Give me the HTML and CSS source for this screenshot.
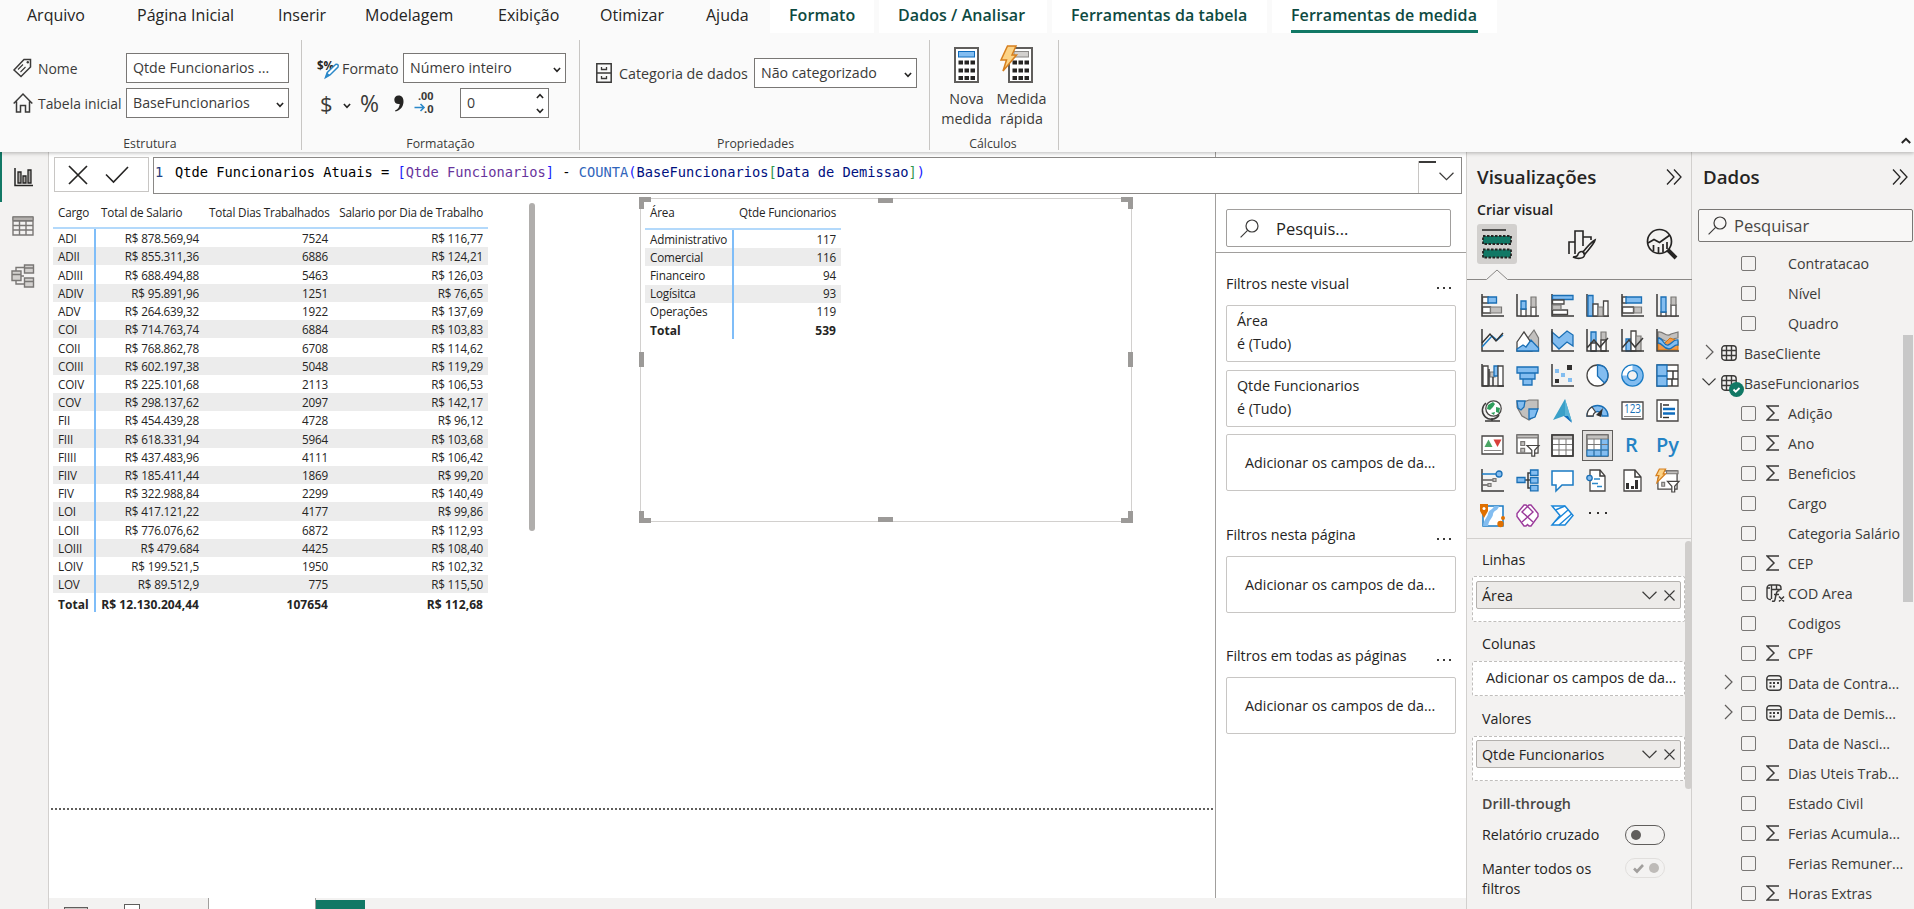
FILE: index.html
```html
<!DOCTYPE html>
<html lang="pt-BR">
<head>
<meta charset="utf-8">
<title>Power BI Desktop</title>
<link rel="stylesheet" href="styles.css">
</head>
<body>
<svg class="sprite" aria-hidden="true">
  <symbol id="sigma" viewBox="0 0 14 16"><path d="M13 1H1l7 7-7 7h12" fill="none" stroke="#3b3a39" stroke-width="1.5"/></symbol>
  <symbol id="chev-r" viewBox="0 0 9 16"><path d="M1 1l7 7-7 7" fill="none" stroke="#605e5c" stroke-width="1.2"/></symbol>
  <symbol id="chev-d" viewBox="0 0 14 8"><path d="M.5.5L7 7 13.500.5" fill="none" stroke="#3b3a39" stroke-width="1.1"/></symbol>
  <symbol id="caret" viewBox="0 0 8 6"><path d="M.9 1L4 4.300 7.100 1" fill="none" stroke="#252423" stroke-width="1.600"/></symbol>
  <symbol id="close" viewBox="0 0 11 11"><path d="M.5.5l10 10M10.500.5l-10 10" fill="none" stroke="#3b3a39" stroke-width="1.100"/></symbol>
  <symbol id="dbl" viewBox="0 0 16 16"><path d="M1 .5L8 8l-7 7.500M8 .5L15 8l-7 7.500" fill="none" stroke="#252423" stroke-width="1.300"/></symbol>
  <symbol id="lens" viewBox="0 0 19 19"><g fill="none" stroke="#3b3a39" stroke-width="1.200"><circle cx="12" cy="7" r="6"/><path d="M7.600 11.400L.6 18.400"/></g></symbol>
  <symbol id="tbl" viewBox="0 0 16 16"><g fill="none" stroke="#3b3a39" stroke-width="1.400"><rect x=".8" y=".8" width="14.400" height="14.400" rx="3"/><path d="M5.500 1v14M10.500 1v14M1 5.500h14M1 10.500h14"/></g></symbol>
  <symbol id="cal" viewBox="0 0 16 16"><g fill="none" stroke="#3b3a39" stroke-width="1.400"><rect x=".8" y=".8" width="14.400" height="14.400" rx="3"/><path d="M1 4.800h14"/></g><path d="M7 7h2v2H7zM11 7h2v2h-2zM3.500 10.500h2v2h-2zM7 10.500h2v2H7zM3.500 7h2v2h-2z" fill="#3b3a39"/></symbol>
</svg>

<div class="app">
<header class="ribbon">
  <nav class="tabs">
    <span class="tab t1">Arquivo</span><span class="tab t2">Página Inicial</span><span class="tab t3">Inserir</span><span class="tab t4">Modelagem</span><span class="tab t5">Exibição</span><span class="tab t6">Otimizar</span><span class="tab t7">Ajuda</span>
    <span class="tab ctx c1">Formato</span><span class="tab ctx c2">Dados / Analisar</span><span class="tab ctx c3">Ferramentas da tabela</span><span class="tab ctx c4"><b class="active">Ferramentas de medida</b></span>
  </nav>
  <div class="groups">
    <section class="group g1">
      <div class="field">
        <svg class="i20" viewBox="0 0 20 20"><g fill="none" stroke="#3b3a39" stroke-width="1.500"><path d="M1 12L11 1.500h6.500v7.500L8 18.500z"/><path d="M5 11.500l5-5M7.500 14l5-5" stroke-width="1.100"/></g><circle cx="14.800" cy="4.300" r="1.200" fill="#3b3a39"/></svg>
        <label class="lb">Nome</label><div class="box">Qtde Funcionarios ...</div>
      </div>
      <div class="field">
        <svg class="i20" viewBox="0 0 20 20"><path d="M.7 10.500L10 1l9.300 9.500M3.500 8.500V19H7.500v-6.500h5V19h4V8.500" fill="none" stroke="#3b3a39" stroke-width="1.500"/></svg>
        <label class="lb">Tabela inicial</label><div class="box">BaseFuncionarios<svg class="car"><use href="#caret"/></svg></div>
      </div>
      <div class="cap">Estrutura</div>
    </section>
    <section class="group g2">
      <div class="field">
        <svg class="i22" viewBox="0 0 22 22"><text x="0" y="13" class="fmt" textLength="17" lengthAdjust="spacingAndGlyphs">$%</text><path d="M8.500 20.500l1.800-5L18.500 7.500c2-1 3.300.5 2.500 2.500l-8 8z" fill="#fff" stroke="#2b88c9" stroke-width="1.500"/><path d="M8 21l2-5.500 3 2.800z" fill="#2b88c9"/></svg>
        <label class="lb">Formato</label><div class="box">Número inteiro<svg class="car"><use href="#caret"/></svg></div>
      </div>
      <div class="field tools">
        <span class="sym dollar">$</span><svg class="car2"><use href="#caret"/></svg><span class="sym pct">%</span>
        <svg class="comma" viewBox="0 0 10 17"><path d="M4.500.5C8 .5 9.700 3 9.500 7 9.200 12 6 15.500 1.500 16.500l-.5-1C4 14.300 5.500 12 5.700 9 2.500 9.500.3 7.500.3 4.700.3 2.300 2 .5 4.500.5z" fill="#252423"/></svg>
        <svg class="dec" viewBox="0 0 20 22"><text x="4" y="7.800" class="fmt2" textLength="15.500" lengthAdjust="spacingAndGlyphs">.00</text><text x="10" y="21.400" class="fmt2" textLength="9.500" lengthAdjust="spacingAndGlyphs">.0</text><path d="M.5 15.500h9M6.500 12l3.500 3.500L6.500 19" fill="none" stroke="#2b88c9" stroke-width="1.600"/></svg>
        <div class="box num">0<span class="spin"><svg class="up"><use href="#caret"/></svg><svg><use href="#caret"/></svg></span></div>
      </div>
      <div class="cap">Formatação</div>
    </section>
    <section class="group g3">
      <div class="field">
        <svg class="cab" viewBox="0 0 16 20"><g fill="none" stroke="#3b3a39" stroke-width="1.500"><path d="M.8.8h14.400v18.400H.8zM1 10h14"/><path d="M5.500 4v2.500h5V4M5.500 13v2.500h5V13" stroke-width="1.300"/></g></svg>
        <label class="lb">Categoria de dados</label><div class="box">Não categorizado<svg class="car"><use href="#caret"/></svg></div>
      </div>
      <div class="cap">Propriedades</div>
    </section>
    <section class="group g4">
      <div class="bigs">
        <div class="big">
          <svg viewBox="0 0 34 38"><rect x="6" y="3" width="23" height="34" fill="#fff" stroke="#605e5c" stroke-width="2"/><rect x="9.500" y="6.500" width="16" height="5.500" fill="#83bdf0" stroke="#0f6cbd"/><path d="M9.500 17.500h17M9.500 25.500h17M9.500 33h17" stroke="#252423" stroke-width="4" stroke-dasharray="4.500 1.500"/></svg>
          <span>Nova<br>medida</span>
        </div>
        <div class="big">
          <svg viewBox="0 0 34 38"><rect x="10" y="3" width="23" height="34" fill="#fff" stroke="#605e5c" stroke-width="2"/><rect x="15" y="6.500" width="14.500" height="5.500" fill="#d2d0ce" stroke="#8a8886"/><path d="M13.500 17.500h17M13.500 25.500h17M13.500 33h17" stroke="#252423" stroke-width="4" stroke-dasharray="4.500 1.500"/><path d="M8.500 1H17l-4 9h4.500L4 26l3.500-11H2z" fill="#fcd386" stroke="#d67f1e" stroke-width="1.500"/></svg>
          <span>Medida<br>rápida</span>
        </div>
      </div>
      <div class="cap">Cálculos</div>
    </section>
    <svg class="collapse" viewBox="0 0 10 7"><path d="M.8 6L5 1.800 9.200 6" fill="none" stroke="#252423" stroke-width="2"/></svg>
  </div>
</header>

<main class="main">
  <aside class="rail">
    <div class="rv on"><svg width="20" height="19" viewBox="0 0 20 19"><path d="M1 0v17.500h18" fill="none" stroke="#252423" stroke-width="1.500"/><path d="M4 4h3v11H4zM9 8h3v7H9zM14 2h3v13h-3z" fill="#a8a6a4" stroke="#252423" stroke-width="1.300"/></svg></div>
    <div class="rv"><svg width="22" height="20" viewBox="0 0 22 20"><path d="M1 1h20v18H1zM1 5h20M1 9.500h20M1 14h20M7.500 5v14M14 5v14" fill="none" stroke="#797775" stroke-width="1.400"/><path d="M1 1h20v3.500H1z" fill="#b3b0ad" stroke="#797775"/></svg></div>
    <div class="rv"><svg width="24" height="24" viewBox="0 0 24 24"><g fill="#d2d0ce" stroke="#797775" stroke-width="1.400"><path d="M5 7V3.500h8M5 16v4h8" fill="none"/><path d="M13.500 1h9v8h-9zM1 7h9v9.500H1zM13.500 14h9v9h-9z"/><path d="M13.500 4h9M1 10.500h9M13.500 17.500h9M10 12h3" /></g></svg></div>
  </aside>

  <div class="work">
    <div class="stage">
      <div class="canvas">
        <table class="mx m1">
          <thead><tr><th>Cargo</th><th>Total de Salario</th><th>Total Dias Trabalhados</th><th>Salario por Dia de Trabalho</th></tr></thead>
          <tbody>
          <tr><td>ADI</td><td>R$ 878.569,94</td><td>7524</td><td>R$ 116,77</td></tr>
          <tr><td>ADII</td><td>R$ 855.311,36</td><td>6886</td><td>R$ 124,21</td></tr>
          <tr><td>ADIII</td><td>R$ 688.494,88</td><td>5463</td><td>R$ 126,03</td></tr>
          <tr><td>ADIV</td><td>R$ 95.891,96</td><td>1251</td><td>R$ 76,65</td></tr>
          <tr><td>ADV</td><td>R$ 264.639,32</td><td>1922</td><td>R$ 137,69</td></tr>
          <tr><td>COI</td><td>R$ 714.763,74</td><td>6884</td><td>R$ 103,83</td></tr>
          <tr><td>COII</td><td>R$ 768.862,78</td><td>6708</td><td>R$ 114,62</td></tr>
          <tr><td>COIII</td><td>R$ 602.197,38</td><td>5048</td><td>R$ 119,29</td></tr>
          <tr><td>COIV</td><td>R$ 225.101,68</td><td>2113</td><td>R$ 106,53</td></tr>
          <tr><td>COV</td><td>R$ 298.137,62</td><td>2097</td><td>R$ 142,17</td></tr>
          <tr><td>FII</td><td>R$ 454.439,28</td><td>4728</td><td>R$ 96,12</td></tr>
          <tr><td>FIII</td><td>R$ 618.331,94</td><td>5964</td><td>R$ 103,68</td></tr>
          <tr><td>FIIII</td><td>R$ 437.483,96</td><td>4111</td><td>R$ 106,42</td></tr>
          <tr><td>FIIV</td><td>R$ 185.411,44</td><td>1869</td><td>R$ 99,20</td></tr>
          <tr><td>FIV</td><td>R$ 322.988,84</td><td>2299</td><td>R$ 140,49</td></tr>
          <tr><td>LOI</td><td>R$ 417.121,22</td><td>4177</td><td>R$ 99,86</td></tr>
          <tr><td>LOII</td><td>R$ 776.076,62</td><td>6872</td><td>R$ 112,93</td></tr>
          <tr><td>LOIII</td><td>R$ 479.684</td><td>4425</td><td>R$ 108,40</td></tr>
          <tr><td>LOIV</td><td>R$ 199.521,5</td><td>1950</td><td>R$ 102,32</td></tr>
          <tr><td>LOV</td><td>R$ 89.512,9</td><td>775</td><td>R$ 115,50</td></tr>
          <tr class="tot"><td>Total</td><td>R$ 12.130.204,44</td><td>107654</td><td>R$ 112,68</td></tr>
          </tbody>
        </table>
        <div class="vscroll"></div>
        <div class="visual">
          <table class="mx m2">
            <thead><tr><th>Área</th><th>Qtde Funcionarios</th></tr></thead>
            <tbody>
            <tr><td>Administrativo</td><td>117</td></tr>
            <tr><td>Comercial</td><td>116</td></tr>
            <tr><td>Financeiro</td><td>94</td></tr>
            <tr><td>Logísitca</td><td>93</td></tr>
            <tr><td>Operações</td><td>119</td></tr>
            <tr class="tot"><td>Total</td><td>539</td></tr>
            </tbody>
          </table>
          <i class="h tl"></i><i class="h tr"></i><i class="h bl"></i><i class="h br"></i>
          <i class="h tm"></i><i class="h bm"></i><i class="h lm"></i><i class="h rm"></i>
        </div>
        <div class="pageend"></div>
      </div>

      <section class="filters">
        <div class="fsearch"><div class="fbox"><svg width="19" height="19"><use href="#lens"/></svg><span>Pesquis...</span></div></div>
        <div class="fsec s1"><div class="fh"><span>Filtros neste visual</span><i class="dots"></i></div>
          <div class="card two"><span>Área</span><span>é (Tudo)</span></div>
          <div class="card two"><span>Qtde Funcionarios</span><span>é (Tudo)</span></div>
          <div class="card add">Adicionar os campos de da...</div></div>
        <div class="fsec s2"><div class="fh"><span>Filtros nesta página</span><i class="dots"></i></div>
          <div class="card add">Adicionar os campos de da...</div></div>
        <div class="fsec s3"><div class="fh"><span>Filtros em todas as páginas</span><i class="dots"></i></div>
          <div class="card add">Adicionar os campos de da...</div></div>
      </section>
    </div>
    <div class="formula">
      <div class="commit">
        <svg width="20" height="20" viewBox="0 0 20 20"><path d="M1 1l18 18M19 1L1 19" stroke="#252423" stroke-width="1.700"/></svg>
        <svg width="24" height="17" viewBox="0 0 24 17"><path d="M1 8.500l7.500 7.500L23 1" fill="none" stroke="#252423" stroke-width="1.600"/></svg>
      </div>
      <div class="dax"><code><span class="ln">1</span>Qtde Funcionarios Atuais = <span class="br1">[</span><span class="ms">Qtde Funcionarios</span><span class="br1">]</span> - <span class="fn">COUNTA</span><span class="br1">(</span><span class="col">BaseFuncionarios</span><span class="br2">[</span><span class="col">Data de Demissao</span><span class="br2">]</span><span class="br1">)</span></code>
        <div class="expand"><i></i><svg width="15" height="9"><use href="#chev-d"/></svg></div></div>
    </div>
    <footer class="pages">
      <div class="views"><i class="desk"></i><i class="phone"></i></div><div class="page"></div><div class="pgon"></div>
    </footer>
  </div>

  <section class="vis">
    <div class="ph"><h2>Visualizações</h2><svg width="16" height="16"><use href="#dbl"/></svg></div>
    <h3>Criar visual</h3>
    <div class="modes">
      <div class="mode on"><svg width="32" height="32" viewBox="0 0 32 32"><path d="M1 2h24" stroke="#252423" stroke-width="1.500"/><path d="M2 8h28v8H2zM2 21.500h28v8H2z" fill="#117865" stroke="#252423" stroke-width="1.800" stroke-dasharray="2.500 1.500"/></svg></div>
      <div class="mode m-fmt"><svg width="30" height="30" viewBox="0 0 30 30"><g fill="none" stroke="#252423" stroke-width="1.600"><path d="M2 25V13h6v12M8 21V2h8v15M16 8h8v3"/><path d="M28 11c-4 2-8 7-12 12l2 2C22 20 27 15 28 11z"/><path d="M16 22.500c-4-.5-5 2-5.500 4-1 1.500-2.500 1.500-4.500 1.500 4 2 11 2 11.500-2z"/></g></svg></div>
      <div class="mode"><svg width="32" height="32" viewBox="0 0 32 32"><g fill="none" stroke="#252423" stroke-width="1.700"><circle cx="13.500" cy="13.500" r="12"/><path d="M2 15l6-3.500 5.500 3L24 7M7.500 17v6M12.500 19v6M17 16v8.500M21 14v7"/></g><path d="M22 22l8 8" stroke="#252423" stroke-width="4"/></svg></div>
    </div>
    <svg class="notch" viewBox="0 0 225 12"><path d="M0 10.500h19.500L30 1l10.500 9.500H225" fill="none" stroke="#8a8886"/></svg>
    <div class="gallery">
      <svg viewBox="0 0 23 23"><path d="M1 0v22h22" class="ax"/><path d="M1.500 3h6v6h-6zM1.500 13h8v6h-8z" class="w"/><path d="M7 3h8.500v6H7z" class="b"/><path d="M9.500 13h11v6h-11z" class="g"/></svg>
      <svg viewBox="0 0 23 23"><path d="M1 0v22h22" class="ax"/><path d="M5 15h5v7H5zM15 13h5v9h-5z" class="w"/><path d="M5 7h5v8H5z" class="b"/><path d="M15 3h5v10h-5z" class="g"/></svg>
      <svg viewBox="0 0 23 23"><path d="M1 0v22h22" class="ax"/><path d="M1.500 1.500H22v4H1.500z" class="b"/><path d="M1.500 6H13v4H1.500zM1.500 16h15v4.500h-15z" class="w"/><path d="M1.500 11H10v4.500H1.500z" class="g"/></svg>
      <svg viewBox="0 0 23 23"><path d="M1 0v22h22" class="ax"/><path d="M2 1.500h5V22H2z" class="b"/><path d="M7 10h5v12H7zM17.500 7H22v15h-4.500z" class="w"/><path d="M12 13h5v9h-5z" class="g"/></svg>
      <svg viewBox="0 0 23 23"><path d="M1 0v22h22" class="ax"/><path d="M1.500 3h4v6h-4zM1.500 13h11v6h-11z" class="w"/><path d="M5 3h15.500v6H5z" class="b"/><path d="M13 13h7.500v6H13z" class="g"/></svg>
      <svg viewBox="0 0 23 23"><path d="M1 0v22h22" class="ax"/><path d="M5 18h5v4H5zM15 11h5v11h-5z" class="w"/><path d="M5 3h5v15H5z" class="b"/><path d="M15 3h5v8h-5z" class="g"/></svg>

      <svg viewBox="0 0 23 23"><path d="M1 0v22h22" class="ax"/><path d="M1 18l10-11 5 4 6-5" class="n" stroke="#1a7bc4"/><path d="M1 14l8-9 6 7 7-8" class="k n"/></svg>
      <svg viewBox="0 0 23 23"><path d="M12 22V9l6-8 4.500 8v13z" class="g"/><path d="M1 13l7-10 8 12v7H1z" class="w"/><path d="M1 22v-2l6-4 3 2 5-7 7.500 8v3z" class="b"/></svg>
      <svg viewBox="0 0 23 23"><path d="M1 3l7 6 8-7 6 4v11l-6-4-8 7-7-7z" class="b"/><path d="M1 0v22h22" class="ax"/></svg>
      <svg viewBox="0 0 23 23"><path d="M5 3h5v19H5z" class="b"/><path d="M15 3h5v19h-5z" class="g"/><path d="M5 14h5v8H5zM15 11h5v11h-5z" class="w"/><path d="M1 0v22h22M1 19l7-8 6 7 8-9" class="ax"/></svg>
      <svg viewBox="0 0 23 23"><path d="M5 10h5v12H5z" class="b"/><path d="M10 2h5v20h-5z" class="w"/><path d="M15 7h5v15h-5z" class="g"/><path d="M1 0v22h22M1 19l7-8 6 7 8-9" class="ax"/></svg>
      <svg viewBox="0 0 23 23"><path d="M2 3c6-1 8 6 13 2l7-2v6c-7 0-7 5-13 3l-7-4z" class="g"/><path d="M2 14h7l5-5 8 3v9H2z" fill="#f2994a" stroke="#d97706"/><path d="M2 9c6 0 5 8 10 7 4-1 5-6 10-5v5c-4-1-5 4-9 4-6 0-6-6-11-6z" class="b"/><path d="M1 0v22h22" class="ax"/></svg>

      <svg viewBox="0 0 23 23"><path d="M2 2h5v20H2z" class="w"/><path d="M9 8h5v5H9z" class="g"/><path d="M13 2h4v10h-4z" class="b"/><path d="M17 2h5v20h-5z" class="w"/><path d="M1 0v22h22M8 5v17M12 13v9" class="ax"/></svg>
      <svg viewBox="0 0 23 23"><path d="M1 3h21v6H1zM4 9h15v6H4zM7 15h9v6H7z" class="b"/></svg>
      <svg viewBox="0 0 23 23"><path d="M1 0v22h22" class="ax"/><path d="M16 1h5v5h-5zM4 15h4v4H4z" fill="#323130"/><path d="M4 5h4v4H4zM10 9h4v4h-4zM17 14h4v4h-4z" fill="#83bdf0"/></svg>
      <svg viewBox="0 0 23 23"><circle cx="11.500" cy="11.500" r="10.500" class="w"/><path d="M11.500 1v11l7 7c6-6 4-18-7-18z" class="b"/></svg>
      <svg viewBox="0 0 23 23"><circle cx="11.500" cy="11.500" r="7.800" fill="none" stroke="#1a7bc4" stroke-width="7"/><circle cx="11.500" cy="11.500" r="7.800" fill="none" stroke="#83bdf0" stroke-width="4.500"/><path d="M3.700 11.500a7.800 7.800 0 0 1 7.800-7.800" fill="none" stroke="#fff" stroke-width="4.500"/></svg>
      <svg viewBox="0 0 23 23"><path d="M1 1h21v21H1z" class="w"/><path d="M1 1h10v11H1zM1 12h10v10H1z" class="b"/><path d="M11 7h11M17 7v8M11 15h11M16 15v7" class="ax"/></svg>

      <svg viewBox="0 0 23 23"><path d="M5 4a9 9 0 1 0 13 12M11 19v3M4 22h15" class="ax"/><circle cx="12.500" cy="9.500" r="7.700" class="w"/><path d="M7 6l5-3 2 2-2 3-3 3-3-1zM15 8l4 1-1 5-3-1zM10 14l4-1-1 3z" fill="#2e9e5b"/></svg>
      <svg viewBox="0 0 23 23"><path d="M1 2l7 1 5-2h9v8l-3 8-6 4-7-4-5-9z" class="g"/><path d="M1 2h8l-1 6-3 3-3-2zM13 10h9l-3 8-6 2z" class="b"/></svg>
      <svg viewBox="0 0 23 23"><path d="M14 0l7 23-8-6-11 4z" fill="#3aa0c8"/><path d="M14 0l7 23-7-6z" fill="#58b3d6"/><path d="M13 17l8 7-4-7z" fill="#0f6cbd"/></svg>
      <svg viewBox="0 0 23 23"><path d="M1 17a10.500 10.500 0 0 1 21 0h-6a4.500 4.500 0 0 0-9 0z" class="b"/><path d="M1 17a10.500 10.500 0 0 1 5-9l3.500 5a5 5 0 0 0-2.500 4z" class="w"/><path d="M10 16l7-7-2 9z" fill="#323130"/></svg>
      <svg viewBox="0 0 23 23"><path d="M1 3h21v17H1z" class="w"/><text x="3" y="14" textLength="17" lengthAdjust="spacingAndGlyphs" class="n123">123</text><path d="M3 17.500h17" stroke="#8a8886"/></svg>
      <svg viewBox="0 0 23 23"><path d="M1 1h21v21H1z" class="w"/><path d="M5 4v15M7 6h6" class="n k"/><path d="M7 10h12M7 14.500h12" stroke="#0f6cbd" stroke-width="2.500"/><path d="M7 18.500h6" class="k n"/></svg>

      <svg viewBox="0 0 23 23"><path d="M1 2h21v18H1z" class="w"/><path d="M3.500 13L7.500 5.500l4 7.500z" fill="#4aa564"/><path d="M12.500 5.500h8L16.500 13z" fill="#d9403a"/><path d="M3 16.500h17" stroke="#8a8886"/></svg>
      <svg viewBox="0 0 24 24"><path d="M1 1h22v19H1z" class="w"/><path d="M1 1h22v3H1z" class="g"/><path d="M5 8h4v4H5zM5 15h4v4H5z" class="g"/><path d="M11.500 12H24l-4.500 5v6h-3v-6z" class="w"/></svg>
      <svg viewBox="0 0 23 23"><path d="M1 1h21v21H1z" class="w"/><path d="M1 1h21v4H1z" class="g"/><path d="M1 10.500h21M1 16h21M8 5v17M15 5v17" class="ln2"/><path d="M1 1h21v21H1z" class="ax"/></svg>
      <svg class="sel" viewBox="0 0 23 23"><path d="M1 1h21v21H1z" class="w"/><path d="M1 16h21v6H1zM15 5h7v17h-7z" fill="#83bdf0"/><path d="M1 1h21v4H1z" class="g"/><path d="M1 10.500h21M1 16h21M8 5v17M15 5v17" class="ln2"/><path d="M1 16v6h21V5M8 16v6M15 5v17M1 16h21" fill="none" stroke="#1a7bc4"/></svg>
      <span class="ltr">R</span>
      <span class="ltr py">Py</span>

      <svg viewBox="0 0 23 23"><path d="M1 0v22h22" class="ax"/><path d="M1 5h16" stroke="#1a7bc4" stroke-width="1.500"/><circle cx="18" cy="5" r="3" class="b"/><path d="M1 11h12M1 16h7" stroke="#605e5c" stroke-width="1.500"/><path d="M12 9.500h3v3h-3zM7 14.500h3v3H7z" class="g"/></svg>
      <svg viewBox="0 0 23 23"><path d="M8 11h7M15 4h-3v15h3" class="ax"/><path d="M1 8.500h8v5H1zM14.500 1H22v5.500h-7.500zM14.500 8.700H22v5.500h-7.500zM14.500 16.300H22v5.500h-7.500z" class="b"/></svg>
      <svg viewBox="0 0 23 23"><path d="M1 2h21v14H11l-6 6v-6H1z" fill="#fff" stroke="#1a7bc4" stroke-width="1.500"/></svg>
      <svg viewBox="0 0 23 23"><path d="M4 1h10l5 6v15H4z" class="w"/><path d="M14 1v6h5" class="ax"/><circle cx="3.500" cy="9" r="2.700" class="b"/><path d="M8 10h6M6 14.500h6M11 17.500h5" stroke="#2b88c9" stroke-width="1.300"/></svg>
      <svg viewBox="0 0 23 23"><path d="M3 1h11l6 7v14H3z" class="w"/><path d="M14 1v7h6" class="ax"/><path d="M5 14h3v6H5zM10 17h3v3h-3zM14 11h3v9h-3z" fill="#323130"/></svg>
      <svg viewBox="0 0 24 24"><path d="M4 2h18v19H2V11z" class="w"/><path d="M11 2h12v3H11z" class="g"/><path d="M6 14h3v4H6z" class="g"/><path d="M12 13h12l-4.500 5v6h-3v-6z" class="w"/><path d="M3.500 0H10L7.500 5H10l-9 9 2-7H0z" fill="#fcd386" stroke="#d67f1e" stroke-width="1.300"/></svg>

      <svg viewBox="0 0 23 23"><path d="M2 2h20v20H2z" fill="#fff" stroke="#1a7bc4" stroke-width="1.500"/><path d="M18 2c-1 5-5 4-6 8 0 4-4 5-5 12H2c1-7 4-8 5-12 1-5 5-4 6-8z" fill="#83bdf0"/><path d="M-1 0h8v7l-4 7-4-7z" fill="#e07000"/><circle cx="3" cy="4.500" r="1.500" fill="#fff"/><circle cx="22" cy="14" r="2" fill="#e07000"/><circle cx="19.500" cy="20" r="3.200" fill="#e07000"/></svg>
      <svg viewBox="0 0 23 23"><path d="M8 1h2l1.500 1.500L13 1h2l7 8.500v3L15 22h-2l-1.500-1.500L10 22H8l-7-9.500v-3z" fill="#fff" stroke="#9b3a9b" stroke-width="1.400"/><path d="M11.500 2.500L6 8l11 10M11.500 2.500L17 8 6 18" fill="none" stroke="#9b3a9b" stroke-width="1.400"/></svg>
      <svg viewBox="0 0 23 23"><path d="M1 2h13l8 9.500-8 9.500H1l8-9.500z" fill="#fff" stroke="#1a86d9" stroke-width="1.500"/><path d="M4.500 6L14 2M4 17.500L17 6M8 21L20.500 10" fill="none" stroke="#1a86d9" stroke-width="1.400"/></svg>
      <span class="more"><i></i><i></i><i></i></span>
    </div>
    <div class="wells">
      <div class="wl">Linhas</div>
      <div class="well big1"><div class="chip"><span>Área</span><svg width="15" height="9"><use href="#chev-d"/></svg><svg width="11" height="11"><use href="#close"/></svg></div></div>
      <div class="wl w2">Colunas</div>
      <div class="well empty">Adicionar os campos de da...</div>
      <div class="wl w3">Valores</div>
      <div class="well big2"><div class="chip"><span>Qtde Funcionarios</span><svg width="15" height="9"><use href="#chev-d"/></svg><svg width="11" height="11"><use href="#close"/></svg></div></div>
      <div class="wl w4">Drill-through</div>
      <div class="opt"><span>Relatório cruzado</span><div class="tg"><i></i></div></div>
      <div class="opt o2"><span>Manter todos os filtros</span><div class="tg off"><svg width="11" height="9" viewBox="0 0 11 9"><path d="M1 4.500l3 3L10 1" fill="none" stroke="#a19f9d" stroke-width="2.600"/></svg><i></i></div></div>
      <div class="wscroll"></div>
    </div>
  </section>

  <section class="data">
    <div class="ph"><h2>Dados</h2><svg width="16" height="16"><use href="#dbl"/></svg></div>
    <div class="dsearch"><svg width="19" height="19"><use href="#lens"/></svg><span>Pesquisar</span></div>
    <ul class="tree">
      <li><i class="e"></i><b></b><i class="s"></i>Contratacao</li>
      <li><i class="e"></i><b></b><i class="s"></i>Nível</li>
      <li><i class="e"></i><b></b><i class="s"></i>Quadro</li>
      <li class="top"><i class="e"><svg width="9" height="16"><use href="#chev-r"/></svg></i><i class="s"><svg width="16" height="16"><use href="#tbl"/></svg></i>BaseCliente</li>
      <li class="top"><i class="e"><svg width="14" height="8"><use href="#chev-d"/></svg></i><i class="s"><svg width="16" height="16"><use href="#tbl"/></svg><svg class="ok" width="15" height="15" viewBox="0 0 15 15"><circle cx="7.500" cy="7.500" r="7.500" fill="#117865"/><path d="M4.500 7.500l2.200 2.200L10.500 6" fill="none" stroke="#fff" stroke-width="1.800"/></svg></i>BaseFuncionarios</li>
      <li><i class="e"></i><b></b><i class="s"><svg width="14" height="16"><use href="#sigma"/></svg></i>Adição</li>
      <li><i class="e"></i><b></b><i class="s"><svg width="14" height="16"><use href="#sigma"/></svg></i>Ano</li>
      <li><i class="e"></i><b></b><i class="s"><svg width="14" height="16"><use href="#sigma"/></svg></i>Beneficios</li>
      <li><i class="e"></i><b></b><i class="s"></i>Cargo</li>
      <li><i class="e"></i><b></b><i class="s"></i>Categoria Salário</li>
      <li><i class="e"></i><b></b><i class="s"><svg width="14" height="16"><use href="#sigma"/></svg></i>CEP</li>
      <li><i class="e"></i><b></b><i class="s"><svg width="19" height="19" viewBox="0 0 19 19"><path d="M5 15.500H4a3 3 0 0 1-3-3V4a3 3 0 0 1 3-3h8a3 3 0 0 1 3 3v2M5.500 1v14M10.500 1v4M5.500 5.500H15M1 4h3" fill="none" stroke="#3b3a39" stroke-width="1.400"/><path d="M6 17c3 1 3-1 3.500-4l1-4c.5-2 1.500-2.500 3-2M8 10.500h5M13 12.500l5 5M18 12.500l-5 5" fill="none" stroke="#3b3a39" stroke-width="1.500"/></svg></i>COD Area</li>
      <li><i class="e"></i><b></b><i class="s"></i>Codigos</li>
      <li><i class="e"></i><b></b><i class="s"><svg width="14" height="16"><use href="#sigma"/></svg></i>CPF</li>
      <li><i class="e"><svg width="9" height="16"><use href="#chev-r"/></svg></i><b></b><i class="s"><svg width="16" height="16"><use href="#cal"/></svg></i>Data de Contra...</li>
      <li><i class="e"><svg width="9" height="16"><use href="#chev-r"/></svg></i><b></b><i class="s"><svg width="16" height="16"><use href="#cal"/></svg></i>Data de Demis...</li>
      <li><i class="e"></i><b></b><i class="s"></i>Data de Nasci...</li>
      <li><i class="e"></i><b></b><i class="s"><svg width="14" height="16"><use href="#sigma"/></svg></i>Dias Uteis Trab...</li>
      <li><i class="e"></i><b></b><i class="s"></i>Estado Civil</li>
      <li><i class="e"></i><b></b><i class="s"><svg width="14" height="16"><use href="#sigma"/></svg></i>Ferias Acumula...</li>
      <li><i class="e"></i><b></b><i class="s"></i>Ferias Remuner...</li>
      <li><i class="e"></i><b></b><i class="s"><svg width="14" height="16"><use href="#sigma"/></svg></i>Horas Extras</li>
    </ul>
    <div class="dscroll"></div>
  </section>
</main>
</div>
</body>
</html>
```
FILE: styles.css
```css
* { box-sizing: border-box; }
body { margin: 0; font-family: "Open Sans", "Noto Sans", sans-serif; font-size: 14.300px; color: #252423; background: #fff; overflow: hidden; }
h2, h3 { margin: 0; font-weight: 600; }
svg { display: block; flex: none; overflow: visible; }
i { font-style: normal; }
.sprite { position: absolute; width: 0; height: 0; }
.app { display: flex; flex-direction: column; width: 1914px; height: 909px; overflow: hidden; }

/* Ribbon */
.ribbon { height: 152px; flex: none; background: #fafafa; box-shadow: 0 1px 4px rgba(0,0,0,.28); position: relative; z-index: 5; }
.tabs { display: flex; height: 33px; padding-left: 27px; font-size: 16px; white-space: nowrap; }
.tab { line-height: 31px; }
.t1 { width: 110px; } .t2 { width: 141px; } .t3 { width: 87px; } .t4 { width: 133px; } .t5 { width: 102px; } .t6 { width: 106px; } .t7 { width: 64px; }
.ctx { background: #fff; color: #0e4a41; font-weight: 600; padding-left: 19px; margin-right: 5px; height: 33px; letter-spacing: .07px; }
.c1 { width: 104px; } .c2 { width: 168px; } .c3 { width: 215px; } .c4 { width: 225px; }
.active { display: block; width: 187px; height: 33px; font-weight: 600; border-bottom: 3px solid #117865; }
.groups { display: flex; height: 119px; padding-top: 7px; position: relative; color: #3b3a39; }
.group { height: 110px; border-right: 1px solid #c8c6c4; display: flex; flex-direction: column; position: relative; }
.g1 { width: 302px; padding: 13px 12px 0 13px; gap: 5px; }
.g2 { width: 278px; padding: 13px 13px 0 15px; gap: 5px; }
.g3 { width: 350px; padding: 18px 12px 0 16px; }
.g4 { width: 129px; padding: 5px 0 0 0; }
.field { display: flex; align-items: center; height: 30px; }
.i20 { width: 20px; height: 20px; margin-right: 5px; }
.i22 { width: 22px; height: 22px; margin-right: 3px; }
.cab { width: 16px; height: 20px; margin-right: 7px; }
.lb { flex: 1; white-space: nowrap; font-size: 14.300px; }
.g1 .lb { font-size: 13.900px; }
.box { width: 163px; height: 30px; background: #fff; border: 1px solid #797775; padding: 0 4px 0 6px; line-height: 28px; font-size: 14.200px; white-space: nowrap; display: flex; align-items: center; justify-content: space-between; }
.car { width: 8px; height: 6px; margin-top: 3px; }
.car2 { width: 8px; height: 6px; margin: 5px 9px 0 11px; }
.tools { padding-left: 3px; }
.sym { font-size: 22px; line-height: 28px; width: 12px; }
.pct { width: 34px; font-size: 23px; }
.comma { width: 10px; height: 17px; }
.dec { width: 20px; height: 22px; margin-left: 10px; }
.fmt { font: bold 13px "Open Sans", sans-serif; fill: #252423; }
.fmt2 { font: bold 9.900px "Open Sans", sans-serif; fill: #3b3a39; }
.num { width: 89px; margin-left: 26px; }
.spin { display: flex; flex-direction: column; gap: 9px; }
.spin svg { width: 8px; height: 6px; }
.spin .up { transform: scaleY(-1); }
.cap { margin-top: auto; text-align: center; font-size: 12.300px; line-height: 16px; position: relative; transform: translate(-1px, 2px); }
.bigs { display: flex; padding-left: 9px; }
.big { width: 55px; font-size: 14.300px; line-height: 20px; text-align: center; white-space: nowrap; }
.big svg { width: 34px; height: 38px; margin: 0 auto 6px 10px; }
.big + .big svg { margin-left: 5px; }
.big span { display: block; }
.collapse { position: absolute; width: 10px; height: 7px; left: 1901px; top: 104px; }

/* Left rail */
.main { display: flex; flex: 1; min-height: 0; }
.rail { width: 49px; background: #f3f2f1; border-right: 1px solid #d2d0ce; }
.rv { height: 49px; display: flex; align-items: center; justify-content: center; padding-right: 2px; }
.rv.on { border-left: 2px solid #117865; height: 50px; }
.rv:nth-child(2) { padding-bottom: 1px; }

/* Report area */
.work { width: 1418px; display: flex; flex-direction: column; position: relative; }
.stage { height: 746px; display: flex; }
.canvas { width: 1166px; position: relative; }
.mx { border-collapse: separate; border-spacing: 0; font-size: 11.700px; letter-spacing: -.17px; table-layout: fixed; position: absolute; }
.mx th { height: 33px; padding: 0 5px; font-weight: 400; text-align: right; line-height: 17px; vertical-align: top; white-space: nowrap; border-bottom: 2px solid #b3d9fb; }
.mx td { height: 18.220px; padding: 0 5px; text-align: right; line-height: 18px; white-space: nowrap; }
.mx th:first-child { text-align: left; }
.mx td:first-child { text-align: left; border-right: 2px solid #7fbdf8; }
.mx tbody tr:nth-child(even):not(.tot) td { background-color: #ececec; }
.mx .tot td { font-weight: 700; font-size: 12px; letter-spacing: .06px; }
.m1 { left: 4px; top: 45px; width: 435px; padding-top: 7px; }
.m1 th { height: 25px; }
.m1 td { padding-top: 1.200px; line-height: 17px; }
.m1 .tot td { padding-top: 3.200px; line-height: 15px; }
.m1 th:nth-child(1) { width: 43px; } .m1 th:nth-child(2) { width: 108px; text-align: left; } .m1 th:nth-child(3) { width: 129px; }
.vscroll { position: absolute; left: 480px; top: 51px; width: 6px; height: 328px; border-radius: 3px; background: #b0aeac; }
.visual { position: absolute; left: 591px; top: 46px; width: 492px; height: 324px; border: 1px solid #d2d0ce; }
.m2 { left: 4px; top: 5px; width: 196px; }
.m2 th { height: 26px; }
.m2 td { line-height: 17px; }
.m2 th:first-child { width: 89px; }
.h { position: absolute; background: #9c9a98; }
.tm, .bm { left: 237px; width: 15px; height: 5px; }
.lm, .rm { top: 153px; width: 5px; height: 15px; }
.tm { top: -1px; } .bm { bottom: -1px; } .lm { left: -2px; } .rm { right: -2px; }
.tl, .tr, .bl, .br { width: 12px; height: 12px; background: none; border: 0 solid #9c9a98; }
.tl { left: -2px; top: -2px; border-width: 5px 0 0 5px; }
.tr { right: -2px; top: -2px; border-width: 5px 5px 0 0; }
.bl { left: -2px; bottom: -2px; border-width: 0 0 5px 5px; }
.br { right: -2px; bottom: -2px; border-width: 0 5px 5px 0; }
.pageend { position: absolute; left: 2px; top: 656px; width: 1163px; height: 2px; background: repeating-linear-gradient(90deg, #605e5c 0 2px, transparent 2px 4px); }

.formula { position: absolute; left: 5px; top: 5px; width: 1409px; display: flex; gap: 4px; z-index: 2; }
.commit { width: 95px; height: 35px; background: #fff; border: 1px solid #c8c6c4; display: flex; align-items: center; gap: 17px; padding-left: 13px; }
.dax { width: 1309px; height: 37px; background: #fff; border: 1px solid #8a8886; display: flex; justify-content: space-between; }
.dax code { font-family: "DejaVu Sans Mono", monospace; font-size: 13.700px; line-height: 29px; color: #000; white-space: pre; }
.ln { color: #26407e; display: inline-block; width: 21px; padding-left: 1px; }
.br1 { color: #1a1aff; } .br2 { color: #2f9650; } .ms { color: #68349c; } .fn { color: #3165bb; } .col { color: #001080; }
.expand { width: 43px; height: 32px; border-left: 1px solid #c8c6c4; margin-top: 3px; }
.expand i { display: block; width: 17px; height: 2px; background: #3b3a39; margin-bottom: 9px; }
.expand svg { margin-left: 20px; }

/* Filters */
.filters { width: 252px; border-left: 1px solid #a19f9d; }
.fsearch { height: 101px; border-bottom: 1px solid #a19f9d; padding: 57px 0 0 10px; }
.fbox { width: 225px; height: 38px; border: 1px solid #a19f9d; border-radius: 2px; display: flex; align-items: center; gap: 17px; padding-left: 13px; font-size: 16.500px; }
.fsec { padding: 18px 0 0 10px; }
.fh { display: flex; justify-content: space-between; height: 34px; line-height: 25px; padding-right: 16px; }
.dots { width: 14px; height: 2px; margin-top: 16px; background: repeating-linear-gradient(90deg, #3b3a39 0 2px, transparent 2px 6px); }
.card { width: 230px; height: 57px; border: 1px solid #c8c6c4; border-radius: 2px; margin-bottom: 8px; white-space: nowrap; }
.card + .card.add { margin-top: -1px; }
.two { display: flex; flex-direction: column; padding: 4px 10px; line-height: 22.500px; }
.add { line-height: 56px; padding-left: 18px; }
.s2 { padding-top: 23px; } .s3 { padding-top: 22px; }

.pages { height: 11px; background: #f3f2f1; display: flex; overflow: hidden; }
.views { width: 160px; border-right: 1px solid #a19f9d; display: flex; padding: 6px 0 0 15px; }
.views i { border: 1px solid #605e5c; border-bottom: 0; width: 16px; height: 8px; background: #fff; }
.views .desk { width: 24px; margin: 3px 36px 0 0; background: #c8c6c4; }
.page { width: 107px; background: #fff; border-right: 1px solid #a19f9d; }
.pgon { width: 49px; height: 9px; margin-top: 2px; background: #117865; }

/* Visualizations */
.vis { width: 226px; background: #f3f2f1; border-left: 1px solid #d2d0ce; border-right: 1px solid #d2d0ce; margin-left: -1px; position: relative; z-index: 3; }
.ph { display: flex; justify-content: space-between; align-items: center; padding: 0 9px 0 10px; height: 50px; }
h2 { font-size: 18.700px; line-height: 24px; }
h3 { font-size: 14.100px; line-height: 20px; padding-left: 10px; margin-top: -2px; }
.modes { display: flex; padding: 4px 0 0 10px; height: 45px; justify-content: space-between; padding-right: 9px; }
.mode { width: 40px; height: 40px; display: flex; align-items: center; justify-content: center; border-radius: 3px; }
.mode.on { background: #d2d0ce; }
.m-fmt { padding-left: 5px; }
.notch { width: 225px; height: 12px; margin-top: 4px; }
.gallery { display: grid; grid-template-columns: repeat(6, 35px); grid-auto-rows: 35px; padding: 13px 0 0 14px; height: 258px; border-bottom: 1px solid #d2d0ce; }
.gallery > svg { width: 23px; height: 23px; }
.gallery .sel { outline: 1px solid #605e5c; outline-offset: 3px; background: #e1dfdd; box-shadow: 0 0 0 3px #e1dfdd; }
.ax { fill: none; stroke: #3b3a39; stroke-width: 1.500; }
.w { fill: #fff; stroke: #484644; stroke-width: 1.300; }
.b { fill: #83bdf0; stroke: #1a6fb5; stroke-width: 1.300; }
.g { fill: #c2c0be; stroke: #797775; stroke-width: 1.200; }
.n { fill: none; stroke-width: 1.400; } .k { stroke: #323130; }
.ln2 { fill: none; stroke: #797775; stroke-width: 1; }
.n123 { font: 12px "Open Sans", sans-serif; fill: #1a6fb5; }
.ltr { font-size: 20px; font-weight: 600; color: #2483c5; line-height: 22px; padding-left: 4px; }
.py { padding-left: 0; }
.more { display: flex; gap: 6px; padding: 8px 0 0 3px; }
.more i { width: 2px; height: 2px; background: #323130; }
.wells { position: relative; height: 370px; padding-left: 5px; }
.wl { padding-left: 10px; line-height: 20px; padding-top: 11px; height: 37px; }
.well { width: 213px; background: #fff; border: 1px dashed #c0bebc; border-radius: 2px; padding: 4px 3px; }
.big1 { height: 46px; } .big2 { height: 45px; padding-top: 3px; }
.chip { height: 28px; background: #edebe9; border: 1px solid #b3b0ad; border-radius: 2px; display: flex; align-items: center; gap: 7px; padding: 0 5px; }
.chip span { flex: 1; white-space: nowrap; }
.w2 { padding-top: 12px; height: 39px; }
.empty { height: 35px; padding: 0 0 0 13px; line-height: 32px; white-space: nowrap; }
.w3 { padding-top: 13px; height: 40px; }
.w4 { font-weight: 600; color: #484644; padding-top: 13px; height: 44px; }
.opt { display: flex; height: 34px; padding: 0 26px 0 10px; justify-content: space-between; line-height: 20px; }
.opt span { width: 125px; }
.tg { width: 40px; height: 20px; border: 1px solid #605e5c; border-radius: 10px; display: flex; align-items: center; padding: 0 5px; }
.tg i { width: 10px; height: 10px; border-radius: 50%; background: #605e5c; }
.tg.off { border-color: #e1dfdd; justify-content: space-between; margin-top: -1px; padding-left: 7px; }
.tg.off i { background: #bebbb8; }
.wscroll { position: absolute; left: 218px; top: 2px; width: 7px; height: 248px; border-radius: 4px; background: #d0cecc; }

/* Data */
.data { width: 222px; background: #f3f2f1; position: relative; z-index: 3; }
.data .ph { padding: 0 6px 0 11px; }
.dsearch { width: 215px; height: 33px; margin: 7px 0 0 6px; background: #f8f7f6; border: 1px solid #797775; border-radius: 2px; display: flex; align-items: center; gap: 7px; padding-left: 9px; font-size: 16.500px; color: #484644; }
.tree { list-style: none; margin: 0; padding: 6px 0 0 36px; font-size: 14.200px; color: #3b3a39; }
.tree li { height: 30px; display: flex; align-items: center; white-space: nowrap; }
.tree .top { margin-left: -24px; font-size: 14px; }
.tree .e { width: 13px; display: flex; justify-content: center; }
.tree li:not(.top) .e svg { margin-left: -13px; }
.tree .e svg { margin-top: -2px; }
.tree b { width: 15px; height: 15px; border: 1px solid #797775; border-radius: 2px; }
.tree .s { width: 32px; display: flex; padding-left: 10px; position: relative; }
.tree .top .e { width: 10px; } .tree .top .s { padding-left: 7px; width: 30px; }
.ok { position: absolute; left: 15px; top: 7px; }
.dscroll { position: absolute; left: 211px; top: 183px; width: 10px; height: 267px; background: #c8c8c8; }
```
